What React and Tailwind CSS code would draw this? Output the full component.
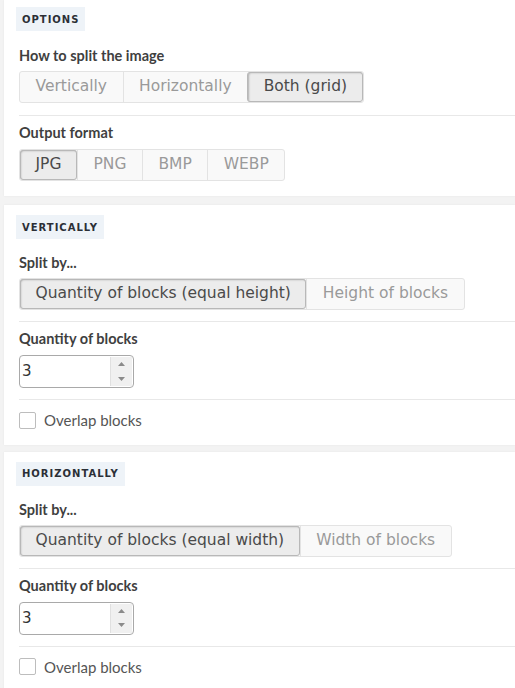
import { useState } from 'react'

// ── Small building blocks ─────────────────────────────────────────────────────
function Badge({ children }) {
  return (
    <div className="flex">
      <div className="-ml-[3px] h-[24px] px-[6px] flex items-center bg-[#eef3f8] text-[10px] font-bold tracking-[1px] text-[#2b2f36] uppercase font-['DejaVu_Sans',sans-serif]">
        {children}
      </div>
    </div>
  )
}

function Label({ children, className = '' }) {
  return (
    <div className={`h-[16px] leading-[16px] text-[14.5px] font-bold text-[#3f3f3f] font-['Lato',sans-serif] ${className}`}>
      {children}
    </div>
  )
}

function Segmented({ options, value, onChange, className = '' }) {
  return (
    <div className={`flex ${className}`}>
      <div className="flex h-[32px] border border-[#e3e3e3] rounded-[3px] bg-[#f9f9f9] overflow-hidden">
        {options.map((opt, i) => {
          const active = opt === value
          return (
            <button
              key={opt}
              onClick={() => onChange(opt)}
              className={
                'px-[15.5px] text-[15.5px] leading-none font-["DejaVu_Sans",sans-serif] ' +
                (i > 0 ? 'border-l border-[#e3e3e3] ' : '') +
                (active
                  ? 'bg-[#ececec] text-[#4a4a4a] shadow-[inset_1px_1px_2px_rgba(0,0,0,0.25)] outline outline-1 -outline-offset-1 outline-[#b8b8b8] rounded-[3px]'
                  : 'text-[#9a9a9a]')
              }
            >
              {opt}
            </button>
          )
        })}
      </div>
    </div>
  )
}

function Separator({ className = '' }) {
  return <div className={`h-px bg-[#e8e8e8] ${className}`} />
}

function NumberInput({ value }) {
  return (
    <div className="flex">
      <div className="flex w-[115px] h-[33px] border border-[#a9a9a9] rounded-[4px] bg-white overflow-hidden">
        <div className="flex-1 pl-[2px] flex items-center text-[15px] text-[#333] font-['DejaVu_Sans',sans-serif]">{value}</div>
        <div className="w-[22px] my-[1px] mr-[1px] flex flex-col bg-[#f0f0f0] border-l border-[#e0e0e0]">
          <div className="flex-1 flex items-center justify-center">
            <svg width="7" height="4" viewBox="0 0 7 4"><path d="M0 4 L3.5 0 L7 4 Z" fill="#8a8a8a" /></svg>
          </div>
          <div className="flex-1 flex items-center justify-center">
            <svg width="7" height="4" viewBox="0 0 7 4"><path d="M0 0 L3.5 4 L7 0 Z" fill="#8a8a8a" /></svg>
          </div>
        </div>
      </div>
    </div>
  )
}

function Checkbox({ label }) {
  const [on, setOn] = useState(false)
  return (
    <label className="flex items-center gap-[8px] cursor-pointer" onClick={() => setOn(!on)}>
      <span className="w-[17px] h-[17px] border border-[#bdbdbd] rounded-[2px] bg-white flex items-center justify-center text-[11px]">
        {on ? '✓' : ''}
      </span>
      <span className="text-[15px] text-[#555] font-['Lato',sans-serif]">{label}</span>
    </label>
  )
}

function Card({ children, className = '' }) {
  return (
    <div className={`ml-[4px] bg-white pl-[12px] shadow-[0_0_2px_rgba(0,0,0,0.06)] ${className}`}>
      <div className="pl-[3px]">{children}</div>
    </div>
  )
}

function SplitCard({ title, options, defaultValue }) {
  const [mode, setMode] = useState(defaultValue)
  return (
    <Card className="pt-[10px] pb-[13px]">
      <Badge>{title}</Badge>
      <Label className="mt-[16px]">Split by...</Label>
      <Segmented className="mt-[7px]" options={options} value={mode} onChange={setMode} />
      <Separator className="mt-[11px]" />
      <Label className="mt-[9px]">Quantity of blocks</Label>
      <div className="mt-[8px]">
        <NumberInput value="3" />
      </div>
      <Separator className="mt-[11px]" />
      <div className="mt-[9px]">
        <Checkbox label="Overlap blocks" />
      </div>
    </Card>
  )
}

// ── Main App ──────────────────────────────────────────────────────────────────
export default function App() {
  const [split, setSplit] = useState('Both (grid)')
  const [format, setFormat] = useState('JPG')

  return (
    <div className="w-[515px] h-[688px] overflow-hidden bg-[#f3f3f3] flex flex-col gap-[9px]">
      {/* Options */}
      <Card className="pt-[7px] pb-[15px]">
        <Badge>Options</Badge>
        <Label className="mt-[17px]">How to split the image</Label>
        <Segmented
          className="mt-[7px]"
          options={['Vertically', 'Horizontally', 'Both (grid)']}
          value={split}
          onChange={setSplit}
        />
        <Separator className="mt-[12px]" />
        <Label className="mt-[9px]">Output format</Label>
        <Segmented
          className="mt-[8px]"
          options={['JPG', 'PNG', 'BMP', 'WEBP']}
          value={format}
          onChange={setFormat}
        />
      </Card>

      <SplitCard
        title="Vertically"
        options={['Quantity of blocks (equal height)', 'Height of blocks']}
        defaultValue="Quantity of blocks (equal height)"
      />
      <div className="-mt-[2px] flex flex-col">
        <SplitCard
          title="Horizontally"
          options={['Quantity of blocks (equal width)', 'Width of blocks']}
          defaultValue="Quantity of blocks (equal width)"
        />
      </div>
    </div>
  )
}
